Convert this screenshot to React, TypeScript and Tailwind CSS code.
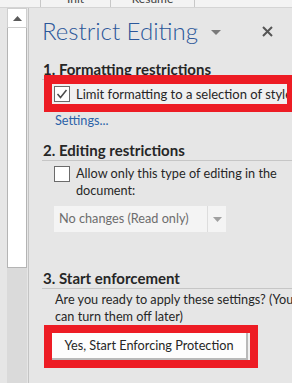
import React from "react";

function Check({ checked }: { checked?: boolean }) {
  return (
    <div className="w-[16px] h-[16px] shrink-0 bg-white border border-[#6b6b6b] flex items-center justify-center">
      {checked && (
        <svg width="14" height="14" viewBox="0 0 14 14">
          <path d="M2.5 7 L5.5 10.5 L11.5 3" fill="none" stroke="#4a4a4a" strokeWidth="1.5" />
        </svg>
      )}
    </div>
  );
}

function Heading({ children }: { children: React.ReactNode }) {
  return (
    <div className="border-b border-[#c6c6c6] pb-[2px] pl-px">
      <div className="text-[15px] leading-[16px] font-bold text-[#262626] whitespace-nowrap">{children}</div>
    </div>
  );
}

export default function App() {
  return (
    <div className="w-[292px] h-[383px] overflow-hidden bg-[#e6e6e6] flex flex-col font-['Lato',sans-serif]">
      {/* top strip */}
      <div className="h-[8px] shrink-0 bg-[#f3f3f3] border-b border-[#d4d4d4] flex text-[12px] text-[#444]">
        <div className="w-[41px] shrink-0 border-r border-[#c8c8c8]" />
        <div className="w-[70px] shrink-0 border-r border-[#c8c8c8] flex items-end justify-center overflow-hidden">
          <span className="leading-[16px]">Init</span>
        </div>
        <div className="w-[84px] shrink-0 border-r border-[#c8c8c8] flex items-end justify-center overflow-hidden">
          <span className="leading-[16px]">Resume</span>
        </div>
      </div>

      <div className="flex flex-1 min-h-0">
        {/* scrollbar */}
        <div className="w-[7px] shrink-0" />
        <div className="w-[20px] shrink-0 flex flex-col">
          <div className="h-[20px] bg-white border border-[#cfcfcf] flex items-center justify-center">
            <svg width="9" height="5" viewBox="0 0 9 5">
              <path d="M0 5 L4.5 0 L9 5 Z" fill="#5a5a5a" />
            </svg>
          </div>
          <div className="h-[240px] bg-white border-x border-b border-[#b4b4b4]" />
          <div className="flex-1 bg-[#dadada]" />
        </div>
        <div className="w-[1px] shrink-0" />
        <div className="w-[1px] shrink-0 bg-[#c4c4c4]" />

        {/* panel */}
        <div className="flex-1 min-w-0 overflow-hidden pl-[13px] flex flex-col">
          {/* title row */}
          <div className="mt-[8px] flex items-center">
            <div className="w-[157px] overflow-hidden whitespace-nowrap text-[24px] leading-[30px] font-light text-[#2b579a]">
              Restrict Editing
            </div>
            <svg className="ml-[12px] mt-[3px]" width="10" height="5" viewBox="0 0 10 5">
              <path d="M0 0 L10 0 L5 5 Z" fill="#7a7a7a" />
            </svg>
            <svg className="ml-[41px]" width="11" height="11" viewBox="0 0 11 11">
              <path d="M1 1 L10 10 M10 1 L1 10" stroke="#555" strokeWidth="2" />
            </svg>
          </div>

          {/* section 1 */}
          <div className="mt-[15px]">
            <Heading>1. Formatting restrictions</Heading>
          </div>
          <div className="relative mt-[-5px] ml-[2px] w-[251px] shrink-0 border-[#ed1c24] border-t-[9px] border-x-[8px] border-b-[8px]">
            <div className="h-[20px] bg-[#f0f0f0] flex items-center pl-[2px] overflow-hidden">
              <Check checked />
              <span className="ml-[6px] text-[13px] leading-[20px] text-[#262626] whitespace-nowrap">
                Limit formatting to a selection of styles
              </span>
            </div>
          </div>
          <div className="ml-[13px] text-[12.7px] leading-[16px] text-[#2b62a8]">Settings...</div>

          {/* section 2 */}
          <div className="mt-[14px]">
            <Heading>2. Editing restrictions</Heading>
          </div>
          <div className="mt-[4px] ml-[12px] flex items-start">
            <div className="mt-[1px]">
              <Check />
            </div>
            <div className="ml-[6px] text-[12.7px] leading-[17px] text-[#262626] whitespace-nowrap">
              <div>Allow only this type of editing in the</div>
              <div>document:</div>
            </div>
          </div>
          <div className="mt-[7px] ml-[12px] w-[172px] h-[26px] bg-[#f4f4f4] flex items-center">
            <div className="flex-1 pl-[5px] text-[12.7px] text-[#6d6d6d] whitespace-nowrap">No changes (Read only)</div>
            <div className="w-[19px] h-full border-l border-[#dddddd] flex items-center justify-center">
              <svg width="9" height="5" viewBox="0 0 9 5">
                <path d="M0 0 L9 0 L4.5 5 Z" fill="#a0a0a0" />
              </svg>
            </div>
          </div>

          {/* section 3 */}
          <div className="mt-[38px]">
            <Heading>3. Start enforcement</Heading>
          </div>
          <div className="mt-[2px] ml-[13px] text-[12.7px] leading-[17px] text-[#262626] whitespace-nowrap">
            <div>Are you ready to apply these settings? (You</div>
            <div>can turn them off later)</div>
          </div>
          <div className="relative ml-[2px] w-[214px] shrink-0 border-[8px] border-[#ed1c24]">
            <div className="h-[27px] flex">
              <div className="w-[196px] h-full bg-[#fdfdfd] border-r-2 border-b-2 border-[#b9b9b9] flex items-center justify-center text-[12.7px] text-[#262626] whitespace-nowrap">
                Yes, Start Enforcing Protection
              </div>
              <div className="flex-1 bg-[#f0f0f0]" />
            </div>
          </div>
        </div>
      </div>
    </div>
  );
}
